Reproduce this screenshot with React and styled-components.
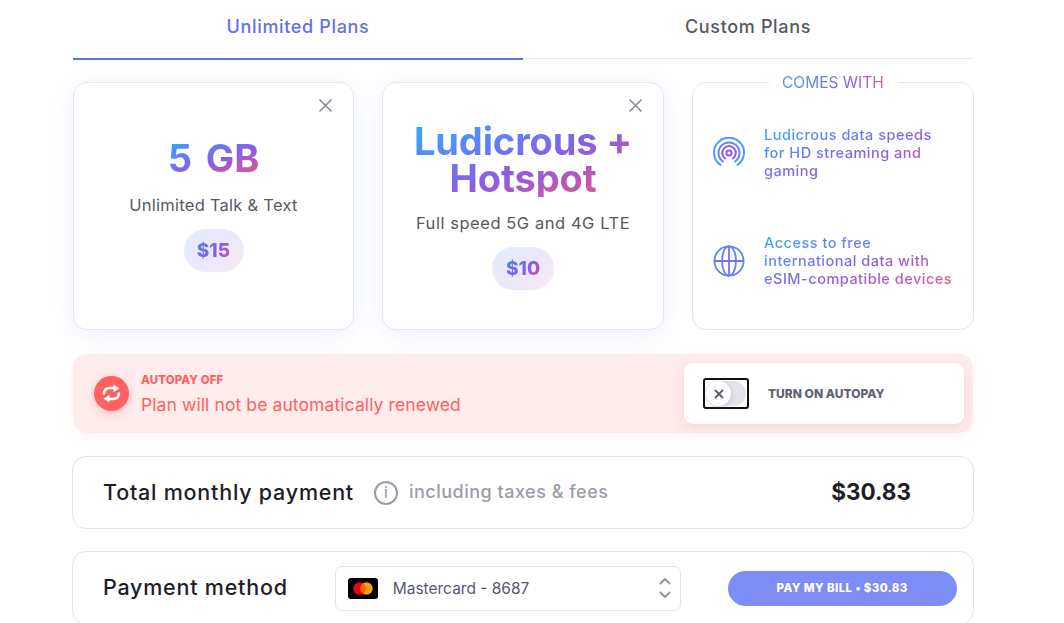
import React from 'react';
import styled, { createGlobalStyle, css } from 'styled-components';

const GlobalStyle = createGlobalStyle`
  html, body {
    margin: 0;
    height: 623px;
    overflow: hidden;
    background: #ffffff;
    font-family: 'Inter', 'Liberation Sans', sans-serif;
  }
`;

const gradientText = css`
  background-image: linear-gradient(160deg, #3ba0ff 10%, #8b5ce8 55%, #f0567a 100%);
  -webkit-background-clip: text;
  background-clip: text;
  color: transparent;
`;

const Page = styled.div`
  width: 900px;
  margin: 0 auto 0 73px;
  display: flex;
  flex-direction: column;
`;

const Tabs = styled.div`
  display: flex;
  height: 58px;
  border-bottom: 1px solid #e8e8ec;
  margin-bottom: 23px;
`;

const Tab = styled.div`
  width: 450px;
  height: 60px;
  box-sizing: border-box;
  padding-top: 14px;
  text-align: center;
  font-size: 18px;
  font-weight: 500;
  line-height: 26px;
  letter-spacing: 0.65px;
  color: ${p => (p.$active ? '#5f72ee' : '#565862')};
  border-bottom: ${p => (p.$active ? '2px solid #5f72ee' : 'none')};
`;

const Cards = styled.div`
  display: grid;
  grid-template-columns: 281px 282px 282px;
  column-gap: 28px;
  height: 248px;
  margin-bottom: 24px;
`;

const PlanCard = styled.div`
  position: relative;
  box-sizing: border-box;
  background: #fff;
  border: 1px solid #e3e6f4;
  border-radius: 14px;
  box-shadow: 0 4px 24px rgba(110, 130, 220, 0.12);
  padding-top: ${p => p.$top}px;
  display: flex;
  flex-direction: column;
  align-items: center;
`;

const CloseButton = styled.div`
  position: absolute;
  top: 14px;
  right: 20px;
  width: 15px;
  height: 15px;
  color: #8b8f9a;
`;

const PlanTitle = styled.div`
  ${gradientText}
  font-size: 38px;
  line-height: 37px;
  font-weight: 700;
  letter-spacing: -0.1px;
  text-align: center;
  word-spacing: ${p => p.$spread || 0}px;
`;

const PlanNote = styled.div`
  margin-top: ${p => p.$gap}px;
  font-size: 16.5px;
  line-height: 24px;
  color: #565862;
  letter-spacing: ${p => p.$track}px;
`;

const PricePill = styled.div`
  margin-top: 12px;
  width: ${p => p.$w}px;
  height: 43px;
  border-radius: 22px;
  background: linear-gradient(135deg, #e4ecfd 0%, #ece8fa 55%, #f9e9f1 100%);
  display: flex;
  align-items: center;
  justify-content: center;
`;

const PriceText = styled.span`
  ${gradientText}
  background-image: linear-gradient(135deg, #4d84f8 0%, #8b5ce8 60%, #e0568a 100%);
  font-size: 19px;
  font-weight: 800;
`;

const Comes = styled.div`
  position: relative;
  box-sizing: border-box;
  border: 1px solid #e6e6ea;
  border-radius: 14px;
  padding: 43px 0 0 20px;
  display: flex;
  flex-direction: column;
  gap: 54px;
`;

const ComesLabel = styled.div`
  position: absolute;
  top: -10px;
  left: 75px;
  background: #fff;
  padding: 0 14px;
  font-size: 15.5px;
  line-height: 20px;
  span {
    ${gradientText}
    background-image: linear-gradient(90deg, #4d9bff 0%, #8b5ce8 65%, #d860a8 100%);
  }
`;

const Perk = styled.div`
  display: flex;
  align-items: center;
  gap: 19px;
  height: 54px;
`;

const PerkText = styled.div`
  ${gradientText}
  flex: 1;
  margin-right: 18px;
  font-size: 14.5px;
  line-height: 18px;
  font-weight: 500;
  letter-spacing: 0.5px;
  white-space: pre;
`;

const Banner = styled.div`
  box-sizing: border-box;
  height: 79px;
  border-radius: 14px;
  background: #ffecec;
  box-shadow: 0 4px 20px rgba(255, 130, 130, 0.07);
  display: flex;
  align-items: center;
  padding: 0 9px 0 21px;
  margin-bottom: 23px;
`;

const AlertIcon = styled.div`
  width: 35px;
  height: 35px;
  border-radius: 50%;
  background: #ff6161;
  box-shadow: 0 3px 8px rgba(255, 97, 97, 0.3);
  display: flex;
  align-items: center;
  justify-content: center;
  margin-right: 12px;
`;

const AlertText = styled.div`
  flex: 1;
  padding-top: 2px;
  color: #ff6161;
`;

const AlertTitle = styled.div`
  font-size: 11.5px;
  line-height: 14px;
  font-weight: 800;
  letter-spacing: 0.1px;
`;

const AlertBody = styled.div`
  margin-top: 7px;
  font-size: 17.5px;
  line-height: 22px;
  letter-spacing: 0.1px;
`;

const AutopayCard = styled.div`
  box-sizing: border-box;
  width: 280px;
  height: 61px;
  background: #fff;
  border-radius: 9px;
  box-shadow: 0 4px 14px rgba(190, 130, 140, 0.2);
  display: flex;
  align-items: center;
  padding-left: 19px;
  gap: 19px;
`;

const Toggle = styled.div`
  box-sizing: border-box;
  width: 46px;
  height: 31px;
  border: 2px solid #111;
  border-radius: 3px;
  padding: 1px;
  display: flex;
  align-items: center;
  background: #fff;
`;

const ToggleTrack = styled.div`
  width: 100%;
  height: 25px;
  border-radius: 13px;
  background: #e2e4ea;
  display: flex;
  align-items: center;
`;

const ToggleKnob = styled.div`
  width: 25px;
  height: 25px;
  border-radius: 50%;
  background: #fff;
  box-shadow: 0 1px 4px rgba(90, 90, 140, 0.3);
  color: #555b6b;
  display: flex;
  align-items: center;
  justify-content: center;
`;

const AutopayLabel = styled.div`
  font-size: 12px;
  font-weight: 800;
  color: #5d6373;
`;

const Row = styled.div`
  box-sizing: border-box;
  width: 902px;
  margin-left: -1px;
  height: ${p => p.$h}px;
  border: 1px solid #e4e4e8;
  border-radius: 14px;
  display: flex;
  align-items: center;
  margin-bottom: 22px;
  flex-shrink: 0;
  padding-left: 30px;
`;

const RowTitle = styled.div`
  font-size: 21.5px;
  font-weight: 500;
  color: #1d1e26;
  letter-spacing: 0.77px;
  white-space: nowrap;
  padding-bottom: 2px;
`;

const InfoIcon = styled.div`
  margin-left: 20px;
  width: 24px;
  height: 24px;
  box-sizing: border-box;
  border: 2px solid #9a9da8;
  border-radius: 50%;
  color: #9a9da8;
  font-size: 15px;
  font-weight: 500;
  display: flex;
  align-items: center;
  justify-content: center;
`;

const TaxNote = styled.div`
  margin-left: 11px;
  flex: 1;
  font-size: 18px;
  font-weight: 500;
  color: #9a9da8;
  letter-spacing: 0.5px;
  padding-bottom: 2px;
`;

const Amount = styled.div`
  margin-right: 62px;
  font-size: 22.5px;
  font-weight: 700;
  color: #1d1e26;
  padding-bottom: 2px;
`;

const Select = styled.div`
  box-sizing: border-box;
  margin-left: 47px;
  width: 346px;
  height: 45px;
  border: 1px solid #e6e6ea;
  border-radius: 7px;
  display: flex;
  align-items: center;
  padding: 0 8px 0 12px;
  font-size: 15.5px;
  color: #565a6e;
`;

const SelectText = styled.div`
  margin-left: 15px;
  flex: 1;
`;

const PayButton = styled.div`
  margin-left: 47px;
  width: 229px;
  height: 35px;
  border-radius: 18px;
  background: #7c8df5;
  color: #fff;
  font-size: 11.5px;
  font-weight: 800;
  letter-spacing: 0.4px;
  display: flex;
  align-items: center;
  justify-content: center;
`;

const CloseIcon = () => (
  <svg width="15" height="15" viewBox="0 0 15 15" fill="none" stroke="currentColor" strokeWidth="1.7">
    <path d="M1.5 1.5l12 12M13.5 1.5l-12 12" />
  </svg>
);

const SignalIcon = () => (
  <svg width="32" height="32" viewBox="0 0 32 32" fill="none" strokeWidth="2" strokeLinecap="round">
    <path d="M7.5 28A15 15 0 1 1 24.5 28" stroke="#45a0fb" />
    <path d="M10 24.5A10.5 10.5 0 1 1 22 24.5" stroke="#6a82f2" />
    <path d="M12.2 21.5A6.8 6.8 0 1 1 19.8 21.5" stroke="#8b5ce8" />
    <circle cx="16" cy="16" r="2.6" stroke="#8b5ce8" />
  </svg>
);

const GlobeIcon = () => (
  <svg width="32" height="32" viewBox="0 0 32 32" fill="none" stroke="#5f86f5" strokeWidth="1.8">
    <circle cx="16" cy="16" r="14.6" />
    <ellipse cx="16" cy="16" rx="7" ry="14.6" />
    <path d="M16 1.4v29.2M1.4 16h29.2" stroke="#7d6ef0" />
  </svg>
);

const RenewArrow = () => (
  <>
    <path d="M2 9.5C2 6 4.6 4 7.5 4H12" fill="none" stroke="#fff" strokeWidth="2.6" strokeLinecap="round" />
    <path d="M11.5 0.5L17.5 4.2L11.5 8.2z" />
  </>
);

const RenewIcon = () => (
  <svg width="19" height="19" viewBox="0 0 19 19" fill="#fff">
    <RenewArrow />
    <g transform="rotate(180 9.5 9.5)">
      <RenewArrow />
    </g>
  </svg>
);

const MastercardLogo = () => (
  <svg width="30" height="21" viewBox="0 0 30 21">
    <rect width="30" height="21" rx="3" fill="#000" />
    <circle cx="11.5" cy="10.5" r="6.2" fill="#eb001b" />
    <circle cx="18.5" cy="10.5" r="6.2" fill="#f79e1b" />
    <path d="M15 5.4a6.2 6.2 0 0 1 0 10.2a6.2 6.2 0 0 1 0-10.2z" fill="#ff5f00" />
  </svg>
);

const Chevrons = () => (
  <svg width="14" height="24" viewBox="0 0 14 24" fill="none" stroke="#8f94a0" strokeWidth="1.8" strokeLinecap="round" strokeLinejoin="round">
    <path d="M2.5 7.5L7 3l4.5 4.5" />
    <path d="M2.5 16.5L7 21l4.5-4.5" />
  </svg>
);

const App = () => {
  return (
    <>
      <GlobalStyle />
      <Page>
        <Tabs>
          <Tab $active>Unlimited Plans</Tab>
          <Tab>Custom Plans</Tab>
        </Tabs>

        <Cards>
          <PlanCard $top={57}>
            <CloseButton><CloseIcon /></CloseButton>
            <PlanTitle $spread={5}>5 GB</PlanTitle>
            <PlanNote $gap={16} $track={0.25}>Unlimited Talk &amp; Text</PlanNote>
            <PricePill $w={60}><PriceText>$15</PriceText></PricePill>
          </PlanCard>
          <PlanCard $top={40}>
            <CloseButton><CloseIcon /></CloseButton>
            <PlanTitle>Ludicrous +<br />Hotspot</PlanTitle>
            <PlanNote $gap={14} $track={0.55}>Full speed 5G and 4G LTE</PlanNote>
            <PricePill $w={62}><PriceText>$10</PriceText></PricePill>
          </PlanCard>
          <Comes>
            <ComesLabel><span>COMES WITH</span></ComesLabel>
            <Perk>
              <SignalIcon />
              <PerkText>{'Ludicrous data speeds\nfor HD streaming and\ngaming'}</PerkText>
            </Perk>
            <Perk>
              <GlobeIcon />
              <PerkText>{'Access to free\ninternational data with\neSIM-compatible devices'}</PerkText>
            </Perk>
          </Comes>
        </Cards>

        <Banner>
          <AlertIcon><RenewIcon /></AlertIcon>
          <AlertText>
            <AlertTitle>AUTOPAY OFF</AlertTitle>
            <AlertBody>Plan will not be automatically renewed</AlertBody>
          </AlertText>
          <AutopayCard>
            <Toggle>
              <ToggleTrack>
                <ToggleKnob>
                  <svg width="10" height="10" viewBox="0 0 10 10" fill="none" stroke="currentColor" strokeWidth="1.8">
                    <path d="M1 1l8 8M9 1l-8 8" />
                  </svg>
                </ToggleKnob>
              </ToggleTrack>
            </Toggle>
            <AutopayLabel>TURN ON AUTOPAY</AutopayLabel>
          </AutopayCard>
        </Banner>

        <Row $h={73}>
          <RowTitle>Total monthly payment</RowTitle>
          <InfoIcon>i</InfoIcon>
          <TaxNote>including taxes &amp; fees</TaxNote>
          <Amount>$30.83</Amount>
        </Row>

        <Row $h={74}>
          <RowTitle>Payment method</RowTitle>
          <Select>
            <MastercardLogo />
            <SelectText>Mastercard - 8687</SelectText>
            <Chevrons />
          </Select>
          <PayButton>PAY MY BILL • $30.83</PayButton>
        </Row>
      </Page>
    </>
  );
};

export default App;
